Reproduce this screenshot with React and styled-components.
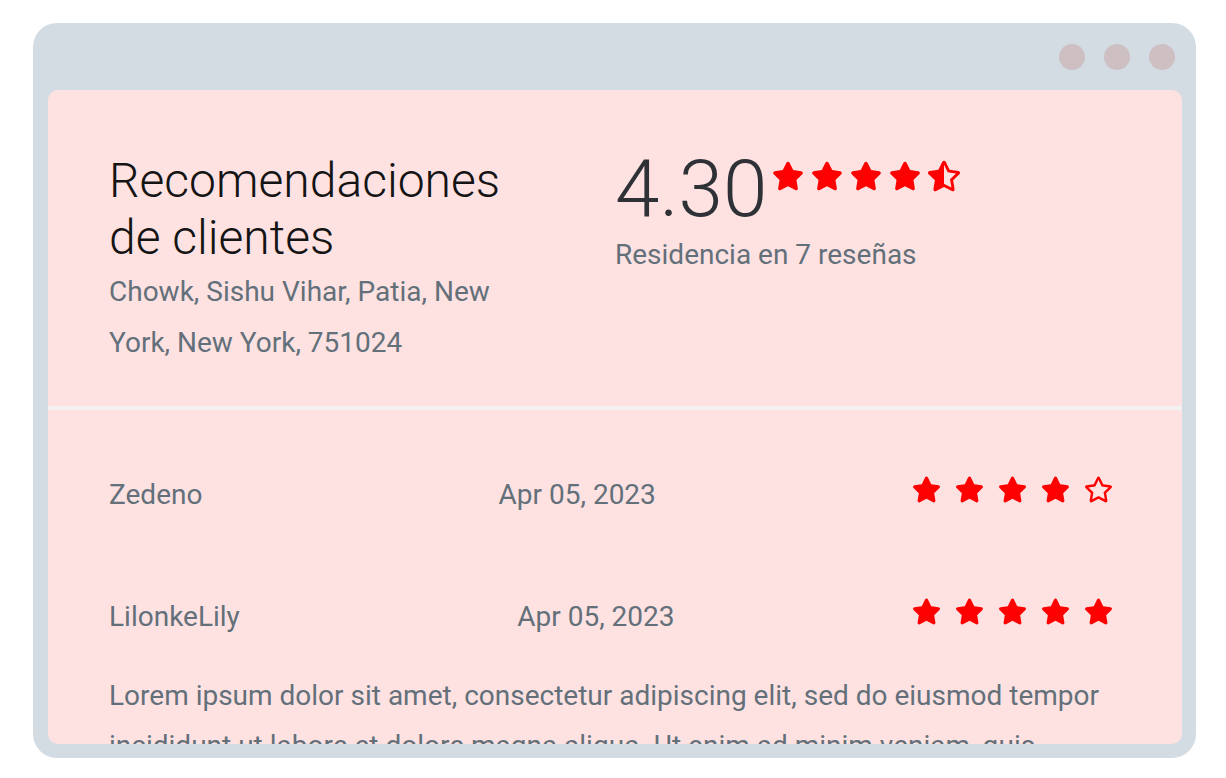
import styled, { createGlobalStyle } from "styled-components"
import { FaStar, FaRegStar, FaStarHalfAlt } from "react-icons/fa"

const reviews = [
  { name: "Zedeno", date: "Apr 05, 2023", rating: 4, comment: "" },
  {
    name: "LilonkeLily",
    date: "Apr 05, 2023",
    rating: 5,
    comment:
      "Lorem ipsum dolor sit amet, consectetur adipiscing elit, sed do eiusmod tempor incididunt ut labore et dolore magna aliqua. Ut enim ad minim veniam, quis nostrud exercitation ullamco laboris nisi ut aliquip ex ea commodo consequat.",
  },
]

function Stars({ value, size, gap }) {
  const icons = []
  for (let i = 1; i <= 5; i++) {
    if (value >= i) icons.push(<FaStar key={i} size={size} />)
    else if (value > i - 1) icons.push(<FaStarHalfAlt key={i} size={size} />)
    else icons.push(<FaRegStar key={i} size={size} />)
  }
  return <StarRow gap={gap}>{icons}</StarRow>
}

export default function App() {
  return (
    <>
      <GlobalStyle />
      <Frame>
        <TitleBar>
          <Dot />
          <Dot />
          <Dot />
        </TitleBar>

        <Panel>
          <Summary>
            <div>
              <Title>Recomendaciones de clientes</Title>
              <Address>Chowk, Sishu Vihar, Patia, New York, New York, 751024</Address>
            </div>
            <div>
              <ScoreLine>
                <Score>4.30</Score>
                <BigStars>
                  <Stars value={4.3} size={32} gap={7} />
                </BigStars>
              </ScoreLine>
              <Count>Residencia en 7 reseñas</Count>
            </div>
          </Summary>

          <Divider />

          <ReviewList>
            {reviews.map((r) => (
              <Review key={r.name}>
                <ReviewHead>
                  <Name>{r.name}</Name>
                  <DateText>{r.date}</DateText>
                  <RowStars>
                    <Stars value={r.rating} size={29} gap={14} />
                  </RowStars>
                </ReviewHead>
                {r.comment && <Comment>{r.comment}</Comment>}
              </Review>
            ))}
          </ReviewList>
        </Panel>
      </Frame>
    </>
  )
}

const GlobalStyle = createGlobalStyle`
  body {
    margin: 0;
    background: #ffffff;
    font-family: Roboto, "Liberation Sans", sans-serif;
  }
`
const Frame = styled.div`
  box-sizing: border-box;
  width: 1163px;
  height: 735px;
  margin: 23px 0 0 33px;
  padding: 0 14px 14px 15px;
  background: #d3dce3;
  border-radius: 24px;
  display: flex;
  flex-direction: column;
`
const TitleBar = styled.div`
  height: 67px;
  flex-shrink: 0;
  display: flex;
  align-items: center;
  justify-content: flex-end;
  gap: 19px;
  padding-right: 7px;
`
const Dot = styled.span`
  width: 26px;
  height: 26px;
  border-radius: 50%;
  background: #cdbfc2;
`
const Panel = styled.main`
  flex: 1;
  background: #fee2e2;
  border-radius: 10px;
  overflow: hidden;
`
const Summary = styled.section`
  box-sizing: border-box;
  height: 316px;
  padding: 62px 61px 0;
  display: grid;
  grid-template-columns: 1fr 1fr;
`
const Title = styled.h1`
  margin: 0;
  max-width: 420px;
  font-size: 48px;
  font-weight: 300;
  line-height: 57px;
  color: #141414;
`
const Address = styled.p`
  margin: 0;
  max-width: 420px;
  font-size: 28px;
  line-height: 51px;
  color: #63707a;
`
const ScoreLine = styled.div`
  display: flex;
  align-items: flex-start;
  gap: 5px;
  margin-top: -3px;
`
const Score = styled.span`
  font-size: 80px;
  font-weight: 300;
  line-height: 80px;
  color: #2e3136;
`
const BigStars = styled.div`
  margin-top: 11px;
`
const Count = styled.p`
  margin: 8px 0 0;
  font-size: 28px;
  line-height: 36px;
  color: #63707a;
`
const StarRow = styled.div`
  display: flex;
  gap: ${(props) => props.gap}px;
  color: #ff0000;
`
const Divider = styled.hr`
  margin: 0;
  border: none;
  height: 4px;
  background: #f3f1f1;
`
const ReviewList = styled.section`
  padding: 65px 61px 0;
  display: flex;
  flex-direction: column;
  gap: 82px;
`
const Review = styled.article``
const ReviewHead = styled.div`
  display: flex;
  align-items: flex-start;
  font-size: 28px;
  line-height: 40px;
  color: #63707a;
`
const Name = styled.span``
const DateText = styled.span`
  flex: 1;
  padding-left: 40px;
  text-align: center;
`
const RowStars = styled.div`
  margin: 0 8px 0 0;
`
const Comment = styled.p`
  margin: 34px 0 0;
  font-size: 28px;
  line-height: 50px;
  color: #63707a;
`
